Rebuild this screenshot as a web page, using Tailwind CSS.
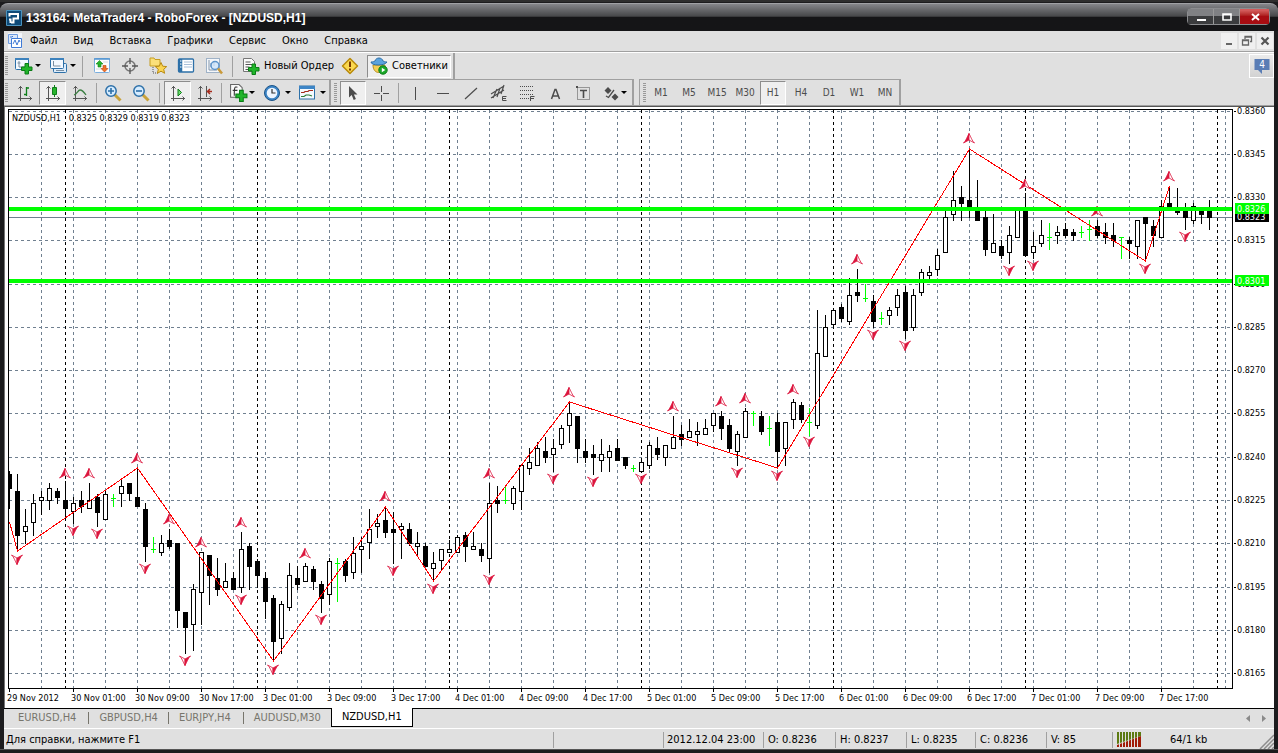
<!DOCTYPE html>
<html lang="ru">
<head>
<meta charset="utf-8">
<title>133164: MetaTrader4 - RoboForex - [NZDUSD,H1]</title>
<script src="https://cdn.jsdelivr.net/npm/@tailwindcss/browser@4"></script>
</head>
<body class="bg-[#1c1c1e] font-['DejaVu_Sans_Condensed','DejaVu_Sans',sans-serif] text-[11px] leading-4 text-black">
<div class="flex min-h-screen flex-col border-t-2 border-[#2e2e2e] bg-[#1c1c1e]">

  <header class="mt-px flex h-7 items-start justify-between rounded-t-lg border-t border-[#a0a1a5] bg-linear-to-b from-[#85868a] from-0% via-[#47484a] via-45% to-[#151517] to-50% pr-2 pl-1.5">
    <div class="flex items-center gap-1 pt-1.5">
      <svg class="size-4" viewBox="0 0 16 16"><rect width="16" height="16" rx="1" fill="#4b93be"/><rect x="1" y="1" width="14" height="14" fill="#0e4a78"/><path d="M4.500 13V9.500H3M3.500 6.500V4H12v4.500H7.500V12.500H5" fill="none" stroke="#fff" stroke-width="2"/></svg>
      <h1 class="font-['Liberation_Sans',sans-serif] text-[12px] leading-4 font-bold whitespace-nowrap text-white">133164: MetaTrader4 - RoboForex - [NZDUSD,H1]</h1>
    </div>
    <div class="mt-1 flex rounded-sm border border-[#8b8c8f] bg-[#111]">
      <button aria-label="Свернуть" class="flex h-[15px] w-[26px] items-center justify-center border-r border-[#999] bg-linear-to-b from-[#808184] from-45% to-[#3b3c3e] to-50%"><svg class="size-3" viewBox="0 0 12 12"><path d="M2 8h9v2H2z" fill="#fff"/></svg></button>
      <button aria-label="Развернуть" class="flex h-[15px] w-[26px] items-center justify-center border-r border-[#999] bg-linear-to-b from-[#808184] from-45% to-[#3b3c3e] to-50%"><svg class="size-3" viewBox="0 0 12 12"><path d="M2 3h8v6H2zM2 3.500h8" fill="none" stroke="#fff" stroke-width="1.600"/></svg></button>
      <button aria-label="Закрыть" class="flex h-[15px] w-[29px] items-center justify-center bg-linear-to-b from-[#d25a5a] from-10% to-[#a80d12] to-50%"><svg class="size-3" viewBox="0 0 12 12"><path d="M3 3l7 6M10 3L3 9" stroke="#fff" stroke-width="2"/></svg></button>
    </div>
  </header>

  <main class="mx-1 flex grow flex-col bg-[#e0e0e0]">
    <div class="flex h-[21px] items-center justify-between border-b border-[#a0a0a0]">
      <nav class="flex items-center pl-1 text-[11px]">
        <svg class="h-4 w-3.5" viewBox="0 0 14 16"><rect width="14" height="16" fill="#f4f6fb"/><path d="M.5 1.500h9v9h-9z" fill="#dce8fa" stroke="#6d9be0"/><path d="M3.500 5.500h10v9h-10z" fill="#fff" stroke="#3f7ad6"/><path d="M2 4h2l1-1M5 11l2-4 2 5 2-5 1 2" fill="none" stroke="#3f7ad6"/></svg>
        <button class="px-2">Файл</button>
        <button class="px-2">Вид</button>
        <button class="px-2">Вставка</button>
        <button class="px-2">Графики</button>
        <button class="px-2">Сервис</button>
        <button class="px-2">Окно</button>
        <button class="px-2">Справка</button>
      </nav>
      <div class="flex gap-0.5 pr-px">
        <button aria-label="Свернуть окно" class="flex size-4 items-center justify-center bg-[#f0f0f0]"><svg class="size-4" viewBox="0 0 16 16"><path d="M5 10h6v2H5z" fill="#666"/></svg></button>
        <button aria-label="Восстановить окно" class="flex size-4 items-center justify-center bg-[#f0f0f0]"><svg class="size-4" viewBox="0 0 16 16"><path d="M6 6V3.500h6.500v5H11M3.500 7h6v5h-6zM6 4h7M3.500 7.500h6" fill="none" stroke="#666" stroke-width="1.300"/></svg></button>
        <button aria-label="Закрыть окно" class="flex size-4 items-center justify-center bg-[#f0f0f0]"><svg class="size-4" viewBox="0 0 16 16"><path d="M4.500 4.500l7 7M11.500 4.500l-7 7" stroke="#555" stroke-width="2.200"/></svg></button>
      </div>
    </div>

    <div class="flex h-[27px] items-center justify-between border-t border-white">
      <div class="flex h-full items-center border-r-2 border-[#a0a0a0]">
        <svg class="mx-px h-5 w-[3px]"><path d="M1.500 0v20" stroke="#999" stroke-width="3" stroke-dasharray="1 1"/></svg>
        <span class="w-px"></span>
        <button aria-label="Новый график" class="flex w-[35px] items-center justify-center gap-px">
          <svg class="h-[18px] w-5 shrink-0" viewBox="0 0 20 18"><rect x="1.500" y="1.500" width="13" height="11" rx="1" fill="#f4f9ff" stroke="#2d70a8"/><path d="M1 2h14" stroke="#3d82bd" stroke-width="2"/><path d="M5 4v6h7M3.500 6h3" fill="none" stroke="#7b8ea0"/><path d="M11 6.500h3.500V10H18v3.500h-3.500V17H11v-3.500H7.500V10H11z" fill="#21b52b" stroke="#0a7d16"/></svg>
          <svg class="h-1 w-[6px] shrink-0" viewBox="0 0 6 4"><path d="M0 0h6L3 3z"/></svg>
        </button>
        <button aria-label="Профили" class="flex w-[35px] items-center justify-center gap-px">
          <svg class="h-[18px] w-5 shrink-0" viewBox="0 0 20 18"><rect x="4.500" y="6.500" width="13" height="9" rx="1" fill="#dcecfb" stroke="#2d70a8"/><rect x="1.500" y="1.500" width="13" height="10" rx="1" fill="#f4f9ff" stroke="#2d70a8"/><path d="M1 2h14" stroke="#3d82bd" stroke-width="2"/><path d="M4.500 4v5h7M7 13.500h8" fill="none" stroke="#7b8ea0"/></svg>
          <svg class="h-1 w-[6px] shrink-0" viewBox="0 0 6 4"><path d="M0 0h6L3 3z"/></svg>
        </button>
        <span class="mr-[5px] ml-0.5 h-[21px] w-px bg-[#a0a0a0]"></span>
        <button aria-label="Обзор рынка" class="flex w-7 justify-center"><svg class="size-[18px]" viewBox="0 0 18 18"><rect x="1.500" y="1.500" width="15" height="14" rx="1" fill="#fdfdfd" stroke="#7aaede"/><path d="M1 2h16" stroke="#4f92cf" stroke-width="1.500"/><path d="M10 5h5M3 12h5" stroke="#d5dbe2"/><path d="M6.500 3.500L10 7H8v3H5V7H3z" fill="#27b42c" stroke="#0d8417" stroke-width=".6"/><path d="M11.500 15L8 11.500h2v-3h3v3h2z" fill="#f07328" stroke="#b8420c" stroke-width=".6"/></svg></button>
        <button aria-label="Окно данных" class="flex w-7 justify-center"><svg class="size-[18px]" viewBox="0 0 18 18"><circle cx="9" cy="9" r="5" fill="none" stroke="#777" stroke-width="1.500"/><path d="M9 1v6M9 11v6M1 9h6M11 9h6" stroke="#555" stroke-width="1.300"/></svg></button>
        <button aria-label="Навигатор" class="flex w-7 justify-center"><svg class="size-[18px]" viewBox="0 0 18 18"><path d="M1 1h4l1 1.500h5V9H1z" fill="#fbe07a" stroke="#c59d22"/><path d="M4 10v6h5" fill="none" stroke="#555" stroke-dasharray="1 1"/><path d="M12 5.500l1.700 3.700 4 .4-3 2.700.9 4-3.600-2.100-3.600 2.100.9-4-3-2.700 4-.4z" fill="#fbd552" stroke="#b98b12"/></svg></button>
        <button aria-label="Терминал" class="flex w-7 justify-center"><svg class="size-[18px]" viewBox="0 0 18 18"><rect x="1.500" y="2" width="15" height="13" rx="1" fill="#fff" stroke="#2d70a8" stroke-width="1.300"/><path d="M3.500 2v13" stroke="#2d70a8" stroke-width="3.500"/><path d="M3 4h1.500M3 7h1.500M3 10h1.500" stroke="#fff"/><path d="M7 5h8M7 7.500h8M7 10h8" stroke="#a8bfd8"/></svg></button>
        <button aria-label="Тестер стратегий" class="flex w-7 justify-center"><svg class="size-[18px]" viewBox="0 0 18 18"><rect x="1.500" y="1.500" width="13" height="14" fill="#f5f7fa" stroke="#9fb2c7"/><path d="M4 3v10h8M6 6v4M9 4v5" fill="none" stroke="#8195ab"/><circle cx="10" cy="8.500" r="4" fill="#cfe5fb" fill-opacity=".8" stroke="#5d94cb" stroke-width="1.500"/><path d="M13 11.500l4 5" stroke="#c99a3a" stroke-width="2.500"/></svg></button>
        <span class="mr-[7px] ml-1 h-[21px] w-px bg-[#a0a0a0]"></span>
        <button class="flex items-center gap-1 px-0.5 whitespace-nowrap"><svg class="size-[18px]" viewBox="0 0 18 18"><path d="M1.500 1.500h8l3 3v10h-11z" fill="#fafafa" stroke="#777"/><path d="M3.500 5h5M3.500 7.500h7M3.500 10h4M3.500 12.500h3" stroke="#555"/><path d="M10 7h3.500v3.500H17V14h-3.500v3.500H10V14H6.500v-3.500H10z" fill="#21b52b" stroke="#0a7d16"/></svg>Новый Ордер</button>
        <button aria-label="Сигнал" class="flex w-7 justify-center"><svg class="size-[18px]" viewBox="0 0 18 18"><path d="M9 1.500L16.500 9 9 16.500 1.500 9z" fill="#fbd84f" stroke="#b88a0a" stroke-linejoin="round" stroke-width="1.500"/><path d="M9 4.500v5.500M9 11.500v2" stroke="#7c3c00" stroke-width="2"/></svg></button>
        <button aria-pressed="true" class="mr-0.5 ml-[3px] flex h-[23px] items-center gap-1 border border-white border-t-[#8d8d8d] border-l-[#8d8d8d] bg-[#efefef] px-0.5 whitespace-nowrap"><svg class="size-[18px]" viewBox="0 0 18 18"><path d="M3 8c0 10 11 10 12 0z" fill="#f4ce55" stroke="#b58d21"/><path d="M1 5c0 4 14 4 16 0-2 0-3-.5-4-1-1-4-7-4-8 0-1 .5-2 1-4 1z" fill="#5ba3dd" stroke="#2b6da6"/><circle cx="13" cy="13" r="4.200" fill="#1ba829" stroke="#0a7d16"/><path d="M11.800 10.800l3.500 2.200-3.500 2.200z" fill="#fff"/></svg>Советники</button>
      </div>
      <button class="flex h-6 w-[25px] items-center justify-center border border-white bg-linear-to-b from-[#ebebeb] to-[#d2d2d2]" aria-label="Сообщения: 4">
        <svg class="size-[18px]" viewBox="0 0 18 18"><path d="M1.500 2h15v11H9v4l-4-4H1.500z" fill="#5a7db5"/><text x="9" y="11" text-anchor="middle" class="fill-white text-[10px]">4</text></svg>
      </button>
    </div>

    <div class="flex h-[27px] items-stretch border-b border-[#a0a0a0]">
      <div class="flex items-center border-t border-r-2 border-[#a0a0a0]">
        <svg class="mx-px h-5 w-[3px]"><path d="M1.500 0v20" stroke="#999" stroke-width="3" stroke-dasharray="1 1"/></svg>
        <span class="w-0.5"></span>
        <button aria-label="Бары" class="flex h-6 w-7 items-center justify-center"><svg class="size-[18px]" viewBox="0 0 18 18"><path d="M4.500 2v12.500H16M2.500 4.500l2-2 2 2M2 14.500h3M13.500 12.500l2 2-2 2M4.500 14v3" fill="none" stroke="#555"/><path d="M10.500 3v9M8 10.500h2.500M10.500 4H13" fill="none" stroke="#0f7f1b" stroke-width="1.300"/></svg></button>
        <button aria-label="Свечи" aria-pressed="true" class="flex h-6 w-[27px] items-center justify-center border border-white border-t-[#8d8d8d] border-l-[#8d8d8d] bg-[#efefef]"><svg class="size-[18px]" viewBox="0 0 18 18"><path d="M4.500 2v12.500H16M2.500 4.500l2-2 2 2M2 14.500h3M13.500 12.500l2 2-2 2M4.500 14v3" fill="none" stroke="#555"/><path d="M10.500 1v12" stroke="#0f7f1b"/><path d="M8.500 3.500h4v7h-4z" fill="#27b42c" stroke="#0f7f1b"/></svg></button>
        <button aria-label="Линия" class="flex h-6 w-7 items-center justify-center"><svg class="size-[18px]" viewBox="0 0 18 18"><path d="M4.500 2v12.500H16M2.500 4.500l2-2 2 2M2 14.500h3M13.500 12.500l2 2-2 2M4.500 14v3" fill="none" stroke="#555"/><path d="M3 11c3-1 4-5 6-5s4 2 6 5" fill="none" stroke="#3c7f44" stroke-width="1.300"/></svg></button>
        <span class="mx-0.5 h-5 w-px bg-[#a0a0a0]"></span>
        <button aria-label="Увеличить" class="flex h-6 w-7 items-center justify-center"><svg class="size-[18px]" viewBox="0 0 18 18"><path d="M10.500 10.500l6 6" stroke="#c9a23a" stroke-width="3"/><circle cx="7" cy="7" r="5.200" fill="#d6ecff" stroke="#2d70a8" stroke-width="1.500"/><path d="M4 7h6M7 4v6" stroke="#2d70a8" stroke-width="1.600"/></svg></button>
        <button aria-label="Уменьшить" class="flex h-6 w-7 items-center justify-center"><svg class="size-[18px]" viewBox="0 0 18 18"><path d="M10.500 10.500l6 6" stroke="#c9a23a" stroke-width="3"/><circle cx="7" cy="7" r="5.200" fill="#d6ecff" stroke="#2d70a8" stroke-width="1.500"/><path d="M4 7h6" stroke="#2d70a8" stroke-width="1.600"/></svg></button>
        <span class="mx-1 h-5 w-px bg-[#a0a0a0]"></span>
        <button aria-label="Автопрокрутка" aria-pressed="true" class="flex h-6 w-[27px] items-center justify-center border border-white border-t-[#8d8d8d] border-l-[#8d8d8d] bg-[#efefef]"><svg class="size-[18px]" viewBox="0 0 18 18"><path d="M4.500 2v12.500H16M2.500 4.500l2-2 2 2M2 14.500h3M13.500 12.500l2 2-2 2M4.500 14v3" fill="none" stroke="#555"/><path d="M9 5l3.500 3.500L9 12z" fill="#6fdc6f" stroke="#0f7f1b"/></svg></button>
        <button aria-label="Сдвиг графика" class="flex h-6 w-7 items-center justify-center"><svg class="size-[18px]" viewBox="0 0 18 18"><path d="M4.500 2v12.500H16M2.500 4.500l2-2 2 2M2 14.500h3M13.500 12.500l2 2-2 2M4.500 14v3M10.500 2v11" fill="none" stroke="#555"/><path d="M11 7.500h5M14 5l-2.500 2.500L14 10" fill="none" stroke="#a62b1c" stroke-width="1.500"/></svg></button>
        <span class="mx-0.5 h-5 w-px bg-[#a0a0a0]"></span>
        <button aria-label="Индикаторы" class="flex h-6 w-[35px] items-center justify-center gap-px"><svg class="size-[19px] shrink-0" viewBox="0 0 18 18"><path d="M1.500 1.500h8l3 3v9h-11z" fill="#fafafa" stroke="#666"/><path d="M8 4c-3-1-3 1-3 8M3.500 7H8" fill="none" stroke="#333"/><path d="M10 7h3.500v3.500H17V14h-3.500v3.500H10V14H6.500v-3.500H10z" fill="#21b52b" stroke="#0a7d16"/></svg><svg class="h-1 w-[6px] shrink-0" viewBox="0 0 6 4"><path d="M0 0h6L3 3z"/></svg></button>
        <button aria-label="Периоды" class="flex h-6 w-[35px] items-center justify-center gap-1"><svg class="size-[18px] shrink-0" viewBox="0 0 18 18"><circle cx="9" cy="9" r="7.500" fill="#3d85c6" stroke="#1c5488"/><circle cx="9" cy="9" r="5.300" fill="#eef6ff"/><path d="M9 5v4h3.500" fill="none" stroke="#333" stroke-width="1.200"/></svg><svg class="h-1 w-[6px] shrink-0" viewBox="0 0 6 4"><path d="M0 0h6L3 3z"/></svg></button>
        <button aria-label="Шаблоны" class="flex h-6 w-[35px] items-center justify-center gap-1"><svg class="size-[18px] shrink-0" viewBox="0 0 18 18"><rect x="1.500" y="2" width="15" height="13" fill="#f5faff" stroke="#2d70a8"/><path d="M1 3.500h16" stroke="#3d85c6" stroke-width="3"/><path d="M3 8.500h3l1-1h3l1-1h4" fill="none" stroke="#a62b1c" stroke-width="1.200"/><path d="M3 12.500h3l2-1.500h3l3 1" fill="none" stroke="#2d7a35" stroke-width="1.200"/></svg><svg class="h-1 w-[6px] shrink-0" viewBox="0 0 6 4"><path d="M0 0h6L3 3z"/></svg></button>
      </div>
      <div class="flex items-center border-t border-r-2 border-[#a0a0a0] pl-0.5 text-[#4c4c4c]">
        <svg class="mx-px h-5 w-[3px]"><path d="M1.500 0v20" stroke="#999" stroke-width="3" stroke-dasharray="1 1"/></svg>
        <span class="w-0.5"></span>
        <button aria-label="Курсор" aria-pressed="true" class="flex h-6 w-[26px] items-center justify-center border border-white border-t-[#8d8d8d] border-l-[#8d8d8d] bg-[#efefef]"><svg class="size-4" viewBox="0 0 16 16"><path d="M4 1v11.500l2.700-2.400L8.700 15l2.200-1-2-4.600h3.600z" fill="#4c4c4c"/></svg></button>
        <button aria-label="Перекрестие" class="flex h-6 w-[30px] items-center justify-center"><svg class="size-[18px]" viewBox="0 0 18 18"><path d="M9.500 2v6M9.500 11v6M2 9.500h6M11 9.500h6" stroke="#4c4c4c"/></svg></button>
        <span class="mx-0.5 h-5 w-px bg-[#a0a0a0]"></span>
        <button aria-label="Вертикальная линия" class="flex h-6 w-7 items-center justify-center"><svg class="size-[18px]" viewBox="0 0 18 18"><path d="M9.500 3v13" stroke="#4c4c4c"/></svg></button>
        <button aria-label="Горизонтальная линия" class="flex h-6 w-7 items-center justify-center"><svg class="size-[18px]" viewBox="0 0 18 18"><path d="M3 9.500h12" stroke="#4c4c4c"/></svg></button>
        <button aria-label="Трендовая линия" class="flex h-6 w-7 items-center justify-center"><svg class="size-[18px]" viewBox="0 0 18 18"><path d="M3 15L15 4" stroke="#4c4c4c" stroke-width="1.200"/></svg></button>
        <button aria-label="Канал" class="flex h-6 w-7 items-center justify-center"><svg class="size-[18px]" viewBox="0 0 18 18"><path d="M1 10L14 2M1 14L14 6M3 14L7 5M7 13l3-9M11 10l3-9" stroke="#4c4c4c" stroke-width="1.200"/><path d="M16.500 12.500h-4v4h4M12.500 14.500H16" fill="none" stroke="#4c4c4c"/></svg></button>
        <button aria-label="Фибоначчи" class="flex h-6 w-7 items-center justify-center"><svg class="size-[18px]" viewBox="0 0 18 18"><path d="M2 2.500h14M2 6.500h14M2 10.500h14M2 14.500h9" stroke="#4c4c4c" stroke-dasharray="1 1"/><path d="M16.500 12.500h-4V17M12.500 14.500H16" fill="none" stroke="#4c4c4c"/></svg></button>
        <button aria-label="Текст" class="flex h-6 w-7 items-center justify-center"><svg class="size-[18px]" viewBox="0 0 18 18"><path d="M5.500 15L9 5.500h1L13.500 15M7 12h5" fill="none" stroke="#4c4c4c" stroke-width="1.500"/></svg></button>
        <button aria-label="Текстовая метка" class="flex h-6 w-7 items-center justify-center"><svg class="size-[18px]" viewBox="0 0 18 18"><path d="M3.500 3.500h12v12h-12z" fill="none" stroke="#4c4c4c" stroke-dasharray="1 1"/><path d="M2 2h2v2H2z" fill="#4c4c4c"/><path d="M6 6.500h7M9.500 6.500V14" stroke="#4c4c4c" stroke-width="1.600"/></svg></button>
        <button aria-label="Стрелки" class="flex h-6 w-[35px] items-center justify-center gap-px"><svg class="size-[18px] shrink-0" viewBox="0 0 18 18"><path d="M6 3l3.500 3.500L6 10 2.500 6.500zM13 9.500l3.500 3.500-3.500 3.500L9.500 13z" fill="#4c4c4c"/><path d="M4 12l2.500 1.500L12 6" fill="none" stroke="#4c4c4c" stroke-width="1.300"/></svg><svg class="h-1 w-[6px] shrink-0" viewBox="0 0 6 4"><path d="M0 0h6L3 3z"/></svg></button>
      </div>
      <div class="ml-[5px] flex items-center border-t border-r-2 border-l border-[#a0a0a0] text-[10px] text-[#4c4c4c]">
        <svg class="mx-px ml-[3px] h-5 w-[3px]"><path d="M1.500 0v20" stroke="#999" stroke-width="3" stroke-dasharray="1 1"/></svg>
        <button class="h-6 w-7">M1</button>
        <button class="h-6 w-7">M5</button>
        <button class="h-6 w-7">M15</button>
        <button class="h-6 w-7">M30</button>
        <button aria-pressed="true" class="mx-px h-6 w-[26px] border border-white border-t-[#8d8d8d] border-l-[#8d8d8d] bg-[#efefef]">H1</button>
        <button class="h-6 w-7">H4</button>
        <button class="h-6 w-7">D1</button>
        <button class="h-6 w-7">W1</button>
        <button class="h-6 w-7">MN</button>
      </div>
    </div>

    <section aria-label="График NZDUSD,H1" class="flex h-[602px] border-t border-l border-t-[#555] border-l-[#777] bg-white">
      <svg id="plot" class="h-full min-w-0 flex-1 text-[9px]" shape-rendering="crispEdges"></svg>
      <svg id="axis" class="h-full w-10 shrink-0 text-[9px]" shape-rendering="crispEdges"></svg>
    </section>

    <div class="flex h-5 items-start justify-between border-t border-black">
      <div class="flex text-[11px] text-[#77756c]">
        <button class="flex h-[18px] items-center pr-3 pl-3.5">EURUSD,H4</button>
        <span class="mt-[3px] h-3 w-px bg-[#77756c]"></span>
        <button class="flex h-[18px] items-center px-2.5">GBPUSD,H4</button>
        <span class="mt-[3px] h-3 w-px bg-[#77756c]"></span>
        <button class="flex h-[18px] items-center pr-3 pl-2.5">EURJPY,H4</button>
        <span class="mt-[3px] h-3 w-px bg-[#77756c]"></span>
        <button class="flex h-[18px] items-center pr-2.5 pl-2.5">AUDUSD,M30</button>
        <button class="-mt-px flex h-[19px] items-center border border-t-0 border-black bg-white px-2.5 text-black">NZDUSD,H1</button>
      </div>
      <div class="flex items-center gap-3 pt-1.5 pr-2">
        <button aria-label="Влево"><svg class="h-[7px] w-1" viewBox="0 0 4 7"><path d="M4 0v7L0 3.500z" fill="#8a8a8a"/></svg></button>
        <button aria-label="Вправо"><svg class="h-[7px] w-1" viewBox="0 0 4 7"><path d="M0 0v7l4-3.500z" fill="#8a8a8a"/></svg></button>
      </div>
    </div>

    <footer class="flex h-[21px] items-center border-t border-white pt-0.5 text-[11px]">
      <span class="grow pl-0.5">Для справки, нажмите F1</span>
      <span class="h-4 w-[110px] border-l border-[#a0a0a0]"></span>
      <span class="w-[100px] border-l border-[#a0a0a0] pl-[3px] whitespace-nowrap">2012.12.04 23:00</span>
      <span class="w-[72px] border-l border-[#a0a0a0] pl-1">O: 0.8236</span>
      <span class="w-[71px] border-l border-[#a0a0a0] pl-1">H: 0.8237</span>
      <span class="w-[69px] border-l border-[#a0a0a0] pl-1">L: 0.8235</span>
      <span class="w-[71px] border-l border-[#a0a0a0] pl-1">C: 0.8236</span>
      <span class="w-[66px] border-l border-[#a0a0a0] pl-1">V: 85</span>
      <span class="flex w-[147px] items-center gap-[29px] border-l border-[#a0a0a0] pl-1">
        <svg class="h-4 w-6" viewBox="0 0 24 16"><path d="M0 0h24v4L0 12z" fill="#5c7a12"/><path d="M0 13l24-9v11H0z" fill="#a11c08"/><path d="M2.500 0v16M5.500 0v16M8.500 0v16M11.500 0v16M14.500 0v16M17.500 0v16M20.500 0v16" stroke="#e0e0e0"/></svg>
        <span>64/1 kb</span>
      </span>
      <svg class="size-[15px] self-end" viewBox="0 0 15 15"><path d="M1 15L15 1M5 15L15 5M9 15l6-6M13 15l2-2" stroke="#8d8d8d" stroke-width="1.500"/></svg>
    </footer>
  </main>
  <div class="h-1 border-t border-[#555]"></div>
</div>

<script>
// [high, low, bodyTop, bodyBottom, type] per bar, 8px apart. w = up, b = down, g = doji (bodyTop is the tick)
const bars = `471 509 474 489 b|474 551 491 536 b|509 544 526 532 w|494 536 503 523 w|491 515 497 501 w|483 510 488 501 w|488 504 491 498 b|481 519 500 509 b|497 524 503 512 w|491 513 500 507 b|483 509 500 509 w|494 527 497 513 b|491 520 494 520 w|494 507 498 0 g|480 507 486 494 w|483 501 483 494 b|469 507 497 507 b|503 562 509 547 b|537 553 549 0 g|535 556 543 553 w|529 549 540 547 b|543 628 543 611 b|612 654 612 628 b|584 651 589 625 w|552 625 552 593 w|555 605 555 576 b|558 596 578 590 b|563 588 581 588 w|572 590 578 590 b|532 593 549 588 w|543 590 546 567 b|559 588 561 576 b|572 619 578 602 b|595 661 598 642 b|601 654 604 639 w|563 611 575 608 w|566 590 578 585 b|563 582 566 582 w|566 590 569 582 b|581 613 584 599 b|558 605 561 595 w|558 602 563 0 g|559 582 561 576 b|537 579 553 573 w|537 573 546 550 w|509 559 529 543 w|514 538 523 527 w|507 538 520 533 b|512 564 529 533 b|523 559 526 530 w|523 546 529 544 b|532 556 543 547 w|543 567 546 567 b|552 581 563 569 w|549 570 549 561 w|540 553 549 553 w|535 553 537 553 w|532 562 535 547 b|532 550 546 550 w|543 562 549 556 b|483 573 503 559 w|486 513 500 504 b|487 504 500 0 g|486 510 488 504 w|464 510 465 492 w|448 475 462 469 w|442 466 448 466 w|437 463 451 458 b|439 472 448 455 w|425 449 428 445 w|402 443 413 426 w|416 463 416 449 b|439 463 451 458 b|445 475 454 458 b|439 472 454 461 w|445 472 451 458 w|439 461 448 461 b|457 469 457 466 b|465 472 468 0 g|458 472 462 472 w|442 469 445 466 w|437 460 448 455 b|445 466 445 458 w|416 449 437 449 w|425 446 434 440 b|419 438 431 438 w|422 446 431 435 w|419 435 428 435 w|413 432 413 426 w|411 440 416 429 b|419 452 425 449 b|431 466 434 452 w|408 438 411 438 w|411 426 413 0 g|411 435 416 432 b|416 446 428 0 g|413 468 422 452 b|422 466 422 449 w|399 429 402 420 w|402 423 405 420 b|408 436 422 0 g|310 429 353 426 w|315 357 327 357 w|308 329 310 325 w|304 322 307 319 b|278 325 295 322 w|269 302 292 296 b|284 302 298 0 g|295 328 301 322 b|312 325 318 0 g|307 325 310 316 w|289 316 295 308 w|286 339 292 331 b|289 331 295 328 w|269 296 272 293 w|266 279 272 276 w|249 276 255 270 w|210 253 217 253 w|171 221 200 215 w|186 221 197 204 b|149 218 200 208 b|180 221 208 221 b|210 256 217 250 b|214 253 243 253 w|240 259 246 256 b|226 264 235 253 w|208 238 208 238 w|193 256 208 256 b|232 259 246 253 w|220 247 235 244 w|223 250 237 0 g|226 244 232 236 w|223 238 229 236 b|229 241 232 236 b|226 238 232 0 g|220 241 229 0 g|220 238 226 236 b|223 244 232 238 b|223 247 235 241 b|237 259 237 0 g|237 259 240 244 b|220 259 220 247 w|217 261 217 224 b|220 247 226 236 b|200 238 206 238 w|186 208 203 208 b|188 215 211 212 b|203 230 211 218 b|203 224 206 221 w|211 224 211 215 b|200 230 211 218 b`.split('|').map(r => r.split(' '));
const ups = [[65,473],[89,473],[137,458],[169,519],[201,542],[241,522],[305,553],[385,496],[489,473],[569,392],[673,406],[721,401],[745,398],[793,389],[857,259],[969,138],[1025,184],[1097,211],[1169,176]];
const downs = [[17,560],[73,531],[97,534],[145,569],[185,661],[241,600],[273,670],[321,620],[393,571],[433,589],[489,580],[553,479],[593,482],[641,479],[737,473],[777,476],[809,442],[873,335],[905,346],[1009,271],[1033,266],[1145,269],[1185,237]];
const rows = [111,154,197,240,284,327,370,413,457,500,543,587,630,673];
let s = '<g transform="translate(-5 -107)">';
let g = '';
rows.forEach(y => g += `M9 ${y}.5H1232`);
for (let x = 41; x < 1232; x += 32) g += `M${x}.5 110V688`;
s += `<path d="${g}" fill="none" stroke="#708090" stroke-dasharray="3 3"/>`;
g = '';
for (let x = 65; x < 1232; x += 192) g += `M${x}.5 110V688`;
s += `<path d="${g}" fill="none" stroke="#000" stroke-dasharray="3 3"/>`;
s += '<path d="M9 217.500H1232" stroke="#708090"/>';
bars.forEach(([h, l, t, b, k], i) => {
  const x = 9 + 8 * i;
  if (k === 'g') { s += `<rect x="${x}" y="${h}" width="1" height="${l - h}" fill="#0f0"/><rect x="${x - 2}" y="${t}" width="5" height="1" fill="#0f0"/>`; return; }
  s += `<path d="M${x}.5 ${h}V${l}" stroke="#000"/>`;
  const bx = i ? x - 2 : x, w = i ? 5 : 3;
  s += k === 'b' ? `<rect x="${bx}" y="${t}" width="${w}" height="${Math.max(2, b - t)}"/>`
    : `<rect x="${x - 1.5}" y="${+t + .5}" width="4" height="${Math.max(2, b - t - 1)}" fill="#fff" stroke="#000"/>`;
});
s += '<path d="M9.500 522L17.500 551 137.500 468 273.500 661 385.500 507 433.500 581 569.500 402 777.500 468 969.500 149 1145.500 261 1169.500 186" fill="none" stroke="#f00"/>';
const mark = (x, y, f) => `<g transform="translate(${x} ${y}) scale(1 ${f})" shape-rendering="auto" stroke="#dc143c" stroke-width=".8"><path d="M0-4.500C-2-1-3 3-5.500 5L0 2z" fill="${f > 0 ? '#dc143c' : '#fff'}"/><path d="M0-4.500C2-1 3 3 5.500 5L0 2z" fill="${f > 0 ? '#fff' : '#dc143c'}"/></g>`;
ups.forEach(([x, y]) => s += mark(x, y, 1));
downs.forEach(([x, y]) => s += mark(x, y, -1));
s += '<path d="M9 209H1232M9 281H1232" stroke="#0f0" stroke-width="4"/>';
s += '<path d="M8.500 109.500H1232.500V688.500H8.500z" fill="none" stroke="#000"/>';
s += '<text x="12" y="121">NZDUSD,H1&#160;&#160; 0.8325 0.8329 0.8319 0.8323</text>';
['29 Nov 2012','30 Nov 01:00','30 Nov 09:00','30 Nov 17:00','3 Dec 01:00','3 Dec 09:00','3 Dec 17:00','4 Dec 01:00','4 Dec 09:00','4 Dec 17:00','5 Dec 01:00','5 Dec 09:00','5 Dec 17:00','6 Dec 01:00','6 Dec 09:00','6 Dec 17:00','7 Dec 01:00','7 Dec 09:00','7 Dec 17:00'].forEach((t, i) => {
  s += `<path d="M${9 + 64 * i}.5 688v4" stroke="#000"/><text x="${7 + 64 * i}" y="701">${t}</text>`;
});
document.getElementById('plot').innerHTML = s + '</g>';

let a = '<g transform="translate(-1234 -107)">';
['0.8360','0.8345','0.8330','0.8315','0.8300','0.8285','0.8270','0.8255','0.8240','0.8225','0.8210','0.8195','0.8180','0.8165'].forEach((t, i) => {
  a += `<path d="M1233 ${rows[i]}.5h3" stroke="#000"/><text x="1237" y="${rows[i] + 3}">${t}</text>`;
});
a += '<rect x="1235" y="212" width="34" height="10"/><text x="1237" y="220" fill="#fff">0.8323</text>';
a += '<rect x="1235" y="203" width="34" height="11" fill="#0f0"/><text x="1237" y="212" fill="#fff">0.8326</text>';
a += '<rect x="1235" y="275" width="34" height="11" fill="#0f0"/><text x="1237" y="284" fill="#fff">0.8301</text>';
document.getElementById('axis').innerHTML = a + '</g>';
</script>
</body>
</html>
